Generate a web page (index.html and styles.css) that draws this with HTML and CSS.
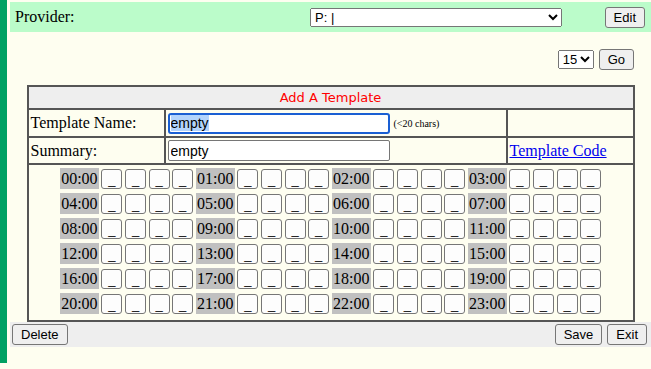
FILE: index.html
```html
<!DOCTYPE html>
<html lang="en">
<head>
    <meta charset="UTF-8">
    <title>Add A Template</title>
    <link rel="stylesheet" href="styles.css">
</head>
<body>
    <div class="page">
        <!-- provider selection -->
        <div class="provider-bar">
            <span class="provider-label">Provider:</span>
            <select class="provider-select"><option>P: |</option></select>
            <button class="btn edit-btn">Edit</button>
        </div>

        <div class="pager">
            <select class="page-select"><option>15</option></select>
            <button class="btn">Go</button>
        </div>

        <!-- template form -->
        <table class="template">
            <tr><th colspan="3" class="title">Add A Template</th></tr>
            <tr class="row-name">
                <td class="col-label">Template Name:</td>
                <td class="col-field"><input id="templateName" class="field field-active" value="empty" maxlength="20" autofocus> <span class="hint">(&lt;20 chars)</span></td>
                <td class="col-extra"></td>
            </tr>
            <tr class="row-summary">
                <td class="col-label">Summary:</td>
                <td class="col-field"><input class="field" value="empty"></td>
                <td class="col-extra"><a href="#" class="code-link">Template Code</a></td>
            </tr>
            <tr>
                <td colspan="3" class="slots-cell"><div class="slots" id="slots"></div></td>
            </tr>
        </table>

        <div class="actions">
            <button class="btn">Delete</button>
            <span class="actions-right">
                <button class="btn">Save</button>
                <button class="btn">Exit</button>
            </span>
        </div>
    </div>

    <script>
        // build the 24 hour slots, 4 quarter buttons each
        var slots = document.getElementById('slots');
        for (var h = 0; h < 24; h++) {
            var label = document.createElement('span');
            label.className = 'hour';
            label.textContent = (h < 10 ? '0' + h : h) + ':00';
            slots.appendChild(label);
            for (var q = 0; q < 4; q++) {
                var b = document.createElement('button');
                b.className = 'slot';
                b.textContent = '_';
                slots.appendChild(b);
            }
        }

        var nameInput = document.getElementById('templateName');
        nameInput.focus();
        nameInput.select();
    </script>
</body>
</html>
```

FILE: styles.css
```css
* {
    box-sizing: border-box;
}

body {
    margin: 0;
    background: #fefef0;
    font-family: 'Liberation Serif', serif;
    font-size: 16px;
    color: #000;
}

.page {
    border-left: 7px solid #00a163;
    padding-left: 3px;
    padding-top: 2px;
    min-height: 363px;
}

.provider-bar {
    display: flex;
    align-items: center;
    height: 30px;
    background: #bbfcca;
    padding: 0 6px 0 5px;
}

.provider-label {
    width: 295px;
}

.provider-select {
    width: 252px;
    height: 19px;
    font-family: 'Liberation Sans', sans-serif;
    font-size: 13px;
}

.btn {
    font-family: 'Liberation Sans', sans-serif;
    font-size: 13px;
    height: 21px;
    padding: 0 8px;
    background: #efefef;
    border: 1px solid #767676;
    border-radius: 3px;
    color: #000;
}

.edit-btn {
    margin-left: auto;
}

.pager {
    display: flex;
    justify-content: flex-end;
    align-items: center;
    gap: 5px;
    padding-right: 17px;
    margin-top: 17px;
    height: 20px;
}

.page-select {
    width: 36px;
    height: 19px;
    font-family: 'Liberation Sans', sans-serif;
    font-size: 13px;
}

.template {
    width: 608px;
    margin: 16px auto 0 auto;
    border-collapse: collapse;
    border: 2px solid #555;
}

.template td,
.template th {
    border: 2px solid #555;
    padding: 0 2px;
}

.title {
    background: #eeeeee;
    color: #ff0000;
    font-family: 'DejaVu Sans', sans-serif;
    font-size: 13px;
    font-weight: normal;
    height: 23px;
}

.row-name td {
    height: 28px;
}

.row-summary td {
    height: 27px;
}

.col-label {
    width: 137px;
}

.col-field {
    width: 342px;
}

.field {
    width: 222px;
    height: 21px;
    font-family: 'Liberation Sans', sans-serif;
    font-size: 14px;
    padding: 1px 2px;
    border: 1px solid #767676;
    border-radius: 2px;
    background: #fff;
    vertical-align: middle;
}

.field-active {
    border: 2px solid #1a5fd3;
    border-radius: 3px;
    padding: 0 1px;
    outline: none;
}

.field-active::selection {
    background: #b3d4fc;
}

.hint {
    font-size: 10px;
    vertical-align: middle;
}

.code-link {
    color: #0000ee;
}

.template .slots-cell {
    padding: 3px 0 6px 0;
}

.slots {
    display: grid;
    grid-template-columns: repeat(4, 39px 21px 21px 21px 21px);
    justify-content: center;
    column-gap: 2.6px;
    row-gap: 4px;
}

.hour {
    background: #c0c0c0;
    height: 21px;
    line-height: 21px;
    text-align: center;
}

.slot {
    height: 20px;
    margin-top: 1px;
    padding: 0;
    font-family: 'Liberation Sans', sans-serif;
    font-size: 13px;
    background: #fdfdfd;
    border: 1px solid #767676;
    border-radius: 3px;
    color: #000;
}

.actions {
    display: flex;
    align-items: center;
    height: 25px;
    background: #eeeeee;
    padding: 0 4px 0 2px;
}

.actions-right {
    margin-left: auto;
    display: flex;
    gap: 5px;
}
```
